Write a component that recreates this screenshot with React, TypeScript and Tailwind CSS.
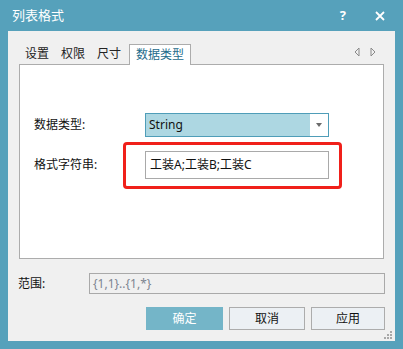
import type { ReactNode } from 'react'

const FONT = { fontFamily: '"Noto Sans", "Noto Sans CJK SC", sans-serif' }

function Tab({ children, active }: { children: ReactNode; active?: boolean }) {
  if (active) {
    return (
      <div className="ml-[2px] -mb-px h-[21px] px-[6px] flex items-center bg-white border border-b-0 border-[#acacac] text-[#1d6b8b] relative z-10">
        {children}
      </div>
    )
  }
  return <div className="h-[20px] px-[6px] flex items-center text-[#222]">{children}</div>
}

function Button({ children, primary, w }: { children: ReactNode; primary?: boolean; w: string }) {
  return (
    <button
      className={
        primary
          ? `${w} h-[23px] bg-[#74b5c8] text-white text-[12px] flex items-center justify-center`
          : `${w} h-[23px] bg-[#ecf0f4] border border-[#acacac] text-[#111] text-[12px] flex items-center justify-center`
      }
    >
      {children}
    </button>
  )
}

export default function App() {
  return (
    <div className="w-[403px] h-[349px] bg-[#56a1bb] flex flex-col text-[12px]" style={FONT}>
      {/* Title bar */}
      <div className="h-[31px] flex items-center pl-[12px] pr-[18px] text-white">
        <span className="text-[13px] flex-1">列表格式</span>
        <span className="font-bold text-[13px] mr-[29px]">?</span>
        <svg width="10" height="10" viewBox="0 0 10 10">
          <path d="M1 1L9 9M9 1L1 9" stroke="white" strokeWidth="1.8" />
        </svg>
      </div>

      {/* Body */}
      <div className="flex-1 mx-[8px] mb-[8px] bg-[#f0f0f0] flex flex-col relative">
        {/* Tabs */}
        <div className="mt-[13px] mx-[11px] flex items-end">
          <Tab>设置</Tab>
          <Tab>权限</Tab>
          <Tab>尺寸</Tab>
          <Tab active>数据类型</Tab>
          <div className="flex-1" />
          <div className="flex items-center gap-[10px] pb-[7px] pr-[8px]">
            <svg width="6" height="10" viewBox="0 0 6 10">
              <path d="M5 1L1 5L5 9Z" fill="none" stroke="#8a8a8a" strokeWidth="1" />
            </svg>
            <svg width="6" height="10" viewBox="0 0 6 10">
              <path d="M1 1L5 5L1 9Z" fill="none" stroke="#8a8a8a" strokeWidth="1" />
            </svg>
          </div>
        </div>

        {/* Panel */}
        <div className="mx-[11px] h-[195px] bg-white border border-[#acacac] relative pl-[14px] pt-[48px] flex flex-col gap-[14px]">
          <div className="flex items-center">
            <span className="w-[111px] text-[#111]">数据类型:</span>
            <div className="w-[184px] h-[24px] border border-[#4f9db8] flex">
              <div className="flex-1 bg-[#add7e2] flex items-center pl-[3px] text-[#111]">String</div>
              <div className="w-[18px] flex items-center justify-center">
                <svg width="6" height="4" viewBox="0 0 6 4">
                  <path d="M0 0H6L3 4Z" fill="#6b6b6b" />
                </svg>
              </div>
            </div>
          </div>
          <div className="flex items-center">
            <span className="w-[111px] text-[#111]">格式字符串:</span>
            <div className="w-[184px] h-[28px] border border-[#a9a9a9] flex items-center pl-[4px] text-[#111]">
              工装A;工装B;工装C
            </div>
          </div>
          <div className="absolute left-[103px] top-[77px] w-[219px] h-[47px] border-[3px] border-[#f0201a] rounded-[4px]" />
        </div>

        {/* Range */}
        <div className="mt-[14px] pl-[10px] pr-[10px] flex items-center">
          <span className="w-[71px] text-[#111]">范围:</span>
          <div className="flex-1 h-[21px] border border-[#a9a9a9] bg-[#f0f0f0] flex items-center pl-[3px] text-[#7d8590]">
            {'{1,1}..{1,*}'}
          </div>
        </div>

        {/* Buttons */}
        <div className="mt-[13px] pr-[10px] flex justify-end gap-[6px]">
          <Button primary w="w-[77px]">确定</Button>
          <Button w="w-[76px]">取消</Button>
          <Button w="w-[74px]">应用</Button>
        </div>

        {/* Resize grip */}
        <svg className="absolute right-[3px] bottom-[2px]" width="8" height="8" viewBox="0 0 8 8">
          <rect x="6" y="0" width="2" height="2" fill="#a8a8a8" />
          <rect x="3" y="3" width="2" height="2" fill="#a8a8a8" />
          <rect x="6" y="3" width="2" height="2" fill="#a8a8a8" />
          <rect x="0" y="6" width="2" height="2" fill="#a8a8a8" />
          <rect x="3" y="6" width="2" height="2" fill="#a8a8a8" />
          <rect x="6" y="6" width="2" height="2" fill="#a8a8a8" />
        </svg>
      </div>
    </div>
  )
}
